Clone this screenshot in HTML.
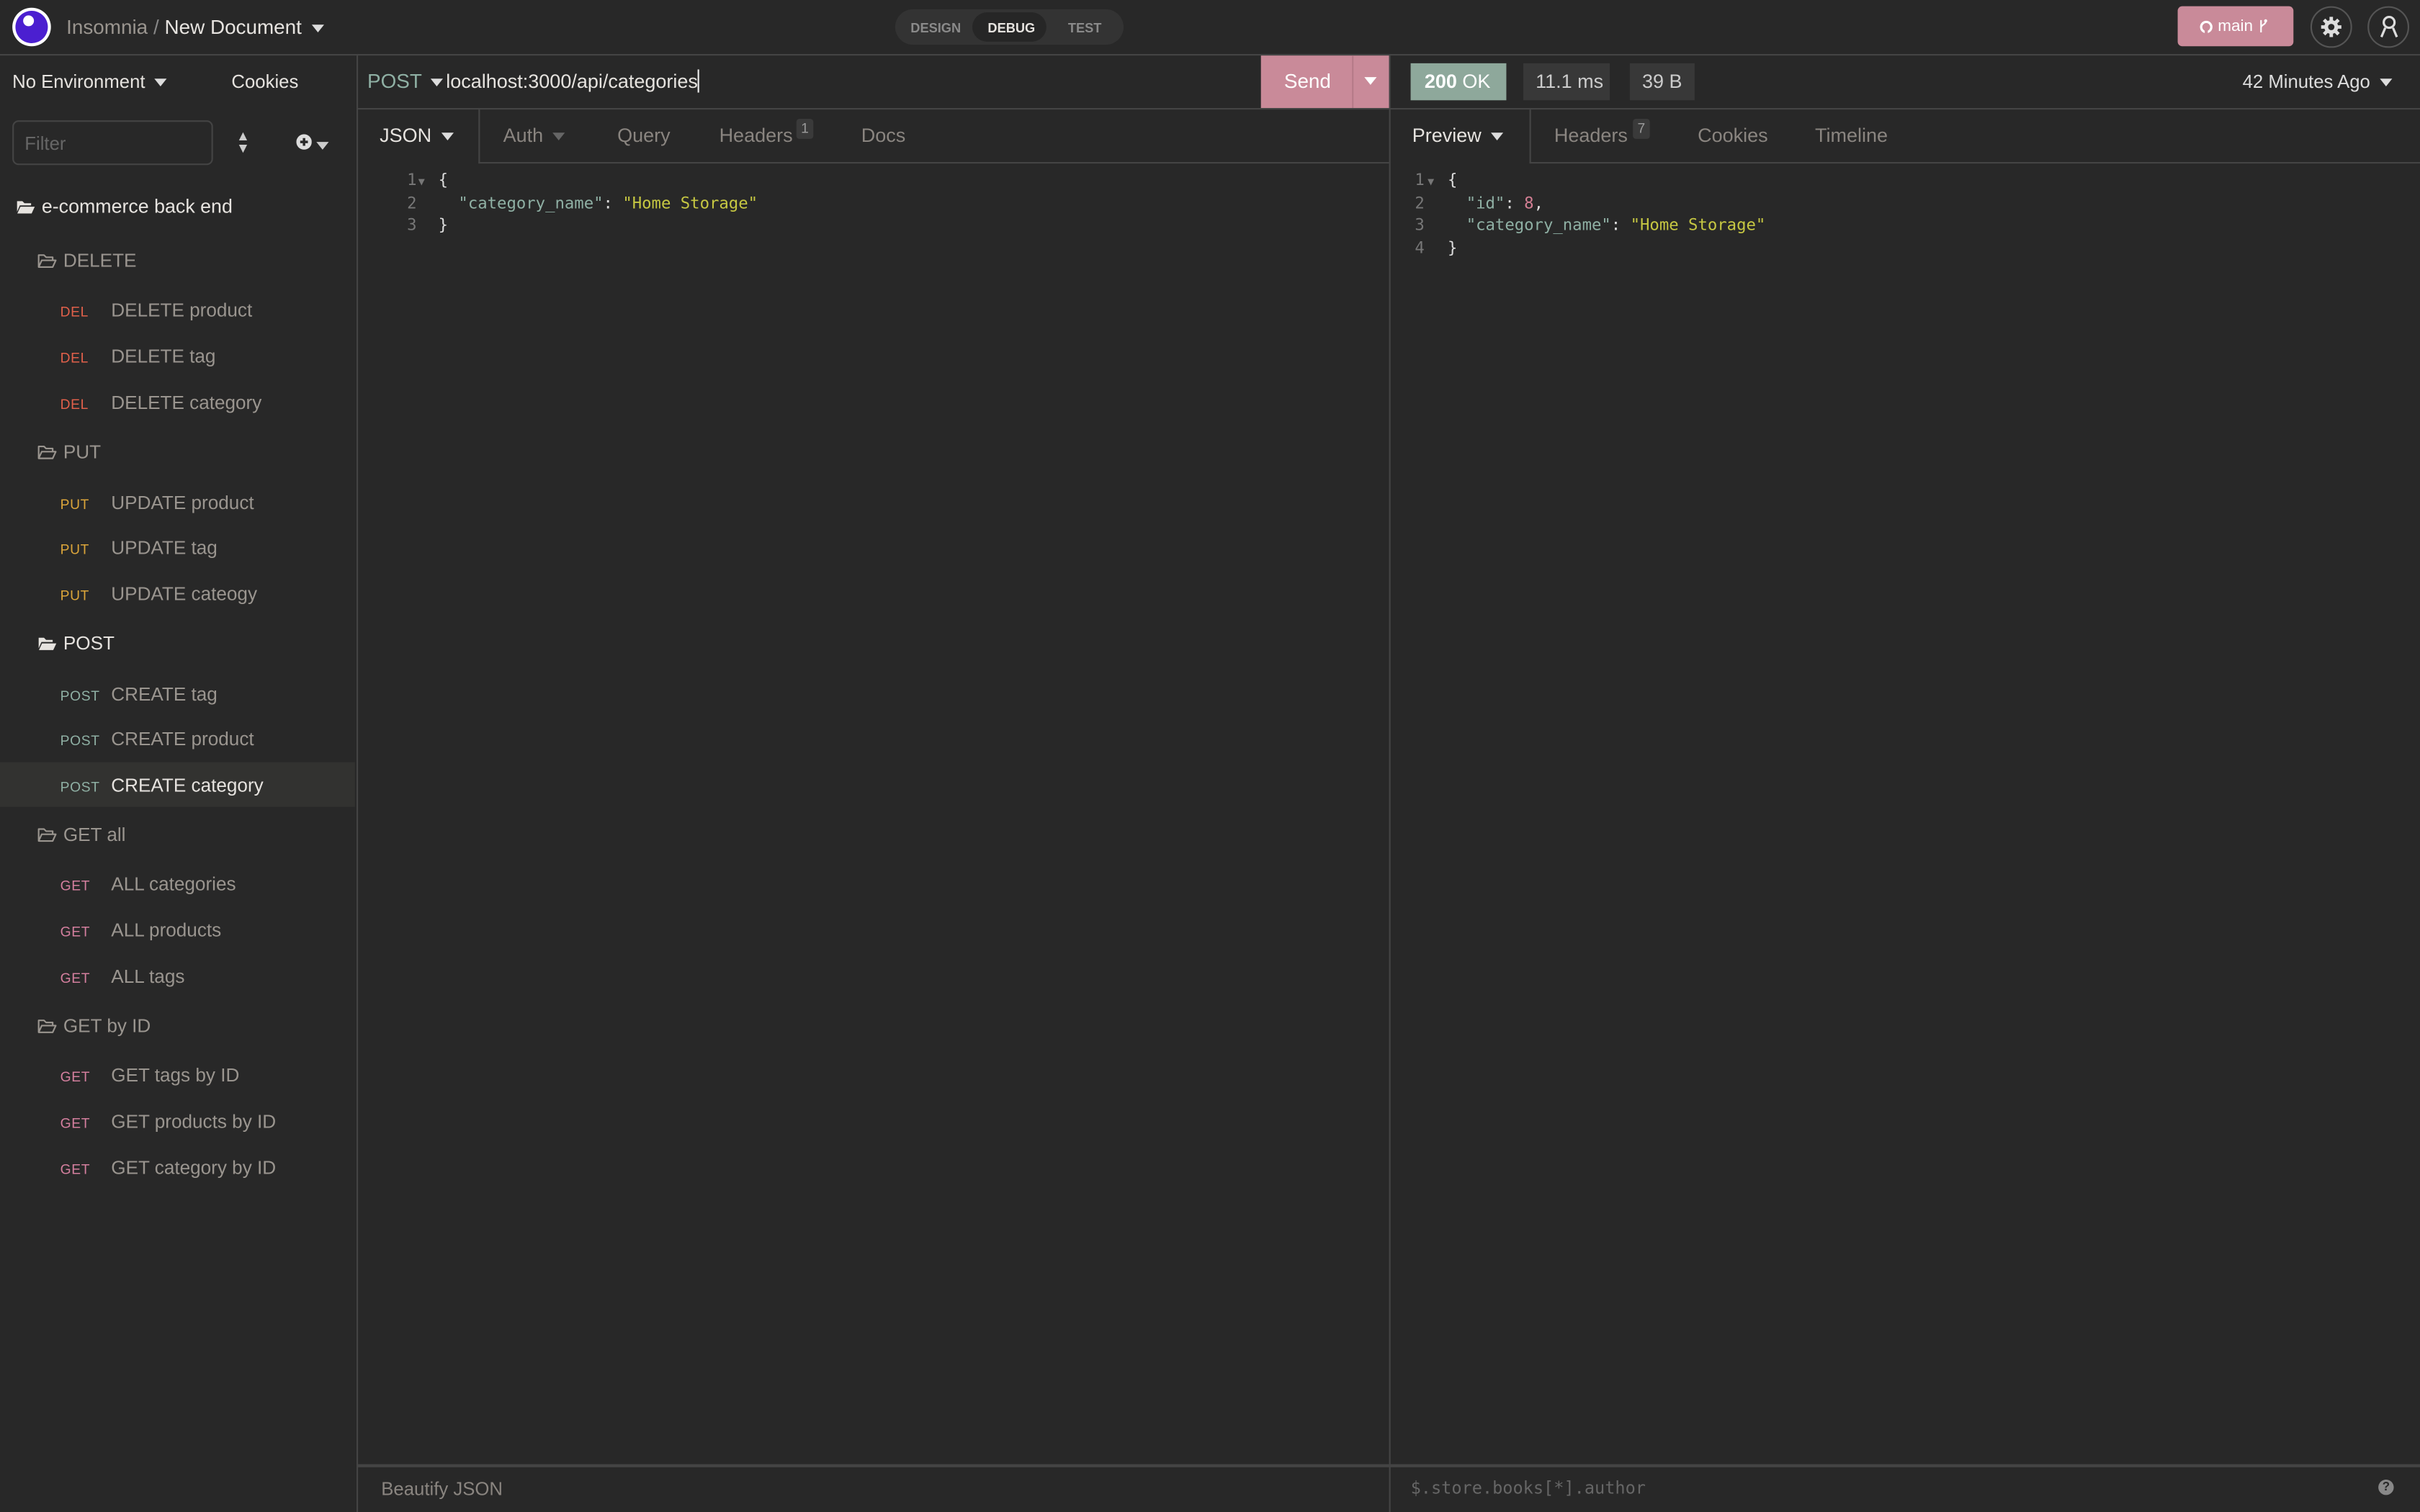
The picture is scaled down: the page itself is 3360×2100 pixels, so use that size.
<!DOCTYPE html>
<html><head><meta charset="utf-8"><style>
*{margin:0;padding:0;box-sizing:border-box}
html,body{width:3360px;height:2100px;background:#282828;overflow:hidden}
#r{position:absolute;left:0;top:0;width:1568px;height:980px;transform:scale(2.142857);transform-origin:0 0;background:#282828;font-family:"Liberation Sans",sans-serif;color:#ddd;font-size:13px}
.a{position:absolute;white-space:nowrap}
.hl{position:absolute;height:1px;background:#444}
.vl{position:absolute;width:1px;background:#444}
.tri{display:inline-block;width:0;height:0;border-left:4px solid transparent;border-right:4px solid transparent;border-top:5px solid #ddd;vertical-align:middle;margin-left:6px}
.m{position:absolute;font-size:9px;letter-spacing:.3px}
.it{position:absolute;left:72px;color:#9a958f;font-size:12.2px}
.fd{position:absolute;left:24px;color:#9a958f;font-size:12.2px}
.fd svg,.top svg{vertical-align:-1px;margin-right:4px}
.mono{font-family:"DejaVu Sans Mono","Liberation Mono",monospace;font-size:10.4px}
.ln{position:absolute;color:#777;text-align:right;width:12px}
.k{color:#8fb0a4}.s{color:#c6c742}.n{color:#d47f94}.p{color:#ddd}
</style></head><body><div id="r">
<svg width="0" height="0" style="position:absolute"><defs>
<symbol id="fo" viewBox="0 0 14 11"><path d="M1 10V1.5h3.8l1.5 1.5H11V5 M1 10L3.2 5.2H13.2L11 10Z" fill="none" stroke="#9a958f" stroke-width="1.1" stroke-linejoin="round"/></symbol>
<symbol id="ff" viewBox="0 0 14 11"><path d="M1 10V1.5h3.8l1.5 1.5H11V4.5H3L1 9Z" fill="#e6e3df"/><path d="M1.2 10.3L3.4 5.5H13.6L11.4 10.3Z" fill="#e6e3df"/></symbol>
</defs></svg>
<!-- top bar -->
<div class="a" style="left:8px;top:5px;width:25px;height:25px;border-radius:50%;background:#fff"></div>
<div class="a" style="left:10px;top:7px;width:21px;height:21px;border-radius:50%;background:#4b1fd0"></div>
<div class="a" style="left:15px;top:10px;width:7px;height:7px;border-radius:50%;background:#fff"></div>
<div class="a" style="left:43px;top:10px;font-size:13px;color:#9a958f">Insomnia <span style="color:#888">/</span> <span style="color:#e6e3df">New Document</span><span class="tri"></span></div>
<div class="a" style="left:580px;top:6px;width:148px;height:23px;border-radius:12px;background:#333"></div>
<div class="a" style="left:630px;top:8px;width:48px;height:19px;border-radius:10px;background:#262626"></div>
<div class="a" style="left:590px;top:13px;font-size:8.5px;font-weight:bold;color:#8a8a8a">DESIGN</div>
<div class="a" style="left:640px;top:13px;font-size:8.5px;font-weight:bold;color:#e6e3df">DEBUG</div>
<div class="a" style="left:692px;top:13px;font-size:8.5px;font-weight:bold;color:#8a8a8a">TEST</div>
<div class="a" style="left:1411px;top:4px;width:75px;height:26px;border-radius:3px;background:#c98a99"></div>
<svg class="a" style="left:1425px;top:13px" width="9" height="9" viewBox="0 0 9 9"><circle cx="4.5" cy="4.5" r="3.3" fill="none" stroke="#fff" stroke-width="1.5"/><rect x="3.5" y="6" width="2" height="3" fill="#c98a99"/></svg>
<div class="a" style="left:1437px;top:11px;font-size:10.5px;color:#fff">main</div>
<svg class="a" style="left:1463px;top:12px" width="7" height="10" viewBox="0 0 7 10"><path d="M2 1V9 M2 6C2 4 5 4 5 2" fill="none" stroke="#fff" stroke-width="1"/><circle cx="5" cy="1.5" r="1" fill="#fff"/></svg>
<div class="a" style="left:1497px;top:4px;width:27px;height:27px;border-radius:50%;border:1px solid #555"></div>
<svg class="a" style="left:1503px;top:10px" width="15" height="15" viewBox="0 0 16 16"><g stroke="#ddd" stroke-width="2.4"><path d="M8 1V15M1 8H15M3 3L13 13M13 3L3 13"/></g><circle cx="8" cy="8" r="4.8" fill="#ddd"/><circle cx="8" cy="8" r="2.2" fill="#282828"/></svg>
<div class="a" style="left:1534px;top:4px;width:27px;height:27px;border-radius:50%;border:1px solid #555"></div>
<svg class="a" style="left:1540px;top:9px" width="16" height="16" viewBox="0 0 16 16"><circle cx="8" cy="5.5" r="3.5" fill="none" stroke="#ddd" stroke-width="1.5"/><path d="M3 15 L5.5 9 M13 15 L10.5 9" stroke="#ddd" stroke-width="1.5" fill="none"/></svg>
<div class="hl" style="left:0;top:35px;width:1568px"></div>
<!-- sidebar -->
<div class="a" style="left:8px;top:46px;font-size:12px;color:#e6e3df">No Environment<span class="tri"></span></div>
<div class="a" style="left:150px;top:46px;font-size:12px;color:#e6e3df">Cookies</div>
<div class="a" style="left:8px;top:78px;width:130px;height:29px;border:1px solid #444;border-radius:4px"></div>
<div class="a" style="left:16px;top:86px;font-size:12px;color:#666">Filter</div>
<div class="a" style="left:153px;top:84px;font-size:9px;color:#ccc;line-height:8px">▲<br>▼</div>
<svg class="a" style="left:192px;top:87px" width="10" height="10" viewBox="0 0 10 10"><circle cx="5" cy="5" r="5" fill="#ddd"/><path d="M5 2.5V7.5M2.5 5H7.5" stroke="#282828" stroke-width="1.6"/></svg>
<div class="a" style="left:201px;top:86px"><span class="tri" style="margin-left:4px;border-top-color:#ccc"></span></div>
<div class="a fd top" style="left:10px;top:127px;font-size:12.5px;color:#e6e3df"><svg width="13" height="10"><use href="#ff"/></svg>e-commerce back end</div>
<div class="fd" style="top:162px"><svg width="13" height="10"><use href="#fo"/></svg>DELETE</div>
<div class="m" style="left:39px;top:197px;color:#e0604a">DEL</div><div class="it" style="top:194px">DELETE product</div>
<div class="m" style="left:39px;top:227px;color:#e0604a">DEL</div><div class="it" style="top:224px">DELETE tag</div>
<div class="m" style="left:39px;top:257px;color:#e0604a">DEL</div><div class="it" style="top:254px">DELETE category</div>
<div class="fd" style="top:286px"><svg width="13" height="10"><use href="#fo"/></svg>PUT</div>
<div class="m" style="left:39px;top:322px;color:#dba53a">PUT</div><div class="it" style="top:319px">UPDATE product</div>
<div class="m" style="left:39px;top:351px;color:#dba53a">PUT</div><div class="it" style="top:348px">UPDATE tag</div>
<div class="m" style="left:39px;top:381px;color:#dba53a">PUT</div><div class="it" style="top:378px">UPDATE cateogy</div>
<div class="fd" style="top:410px;color:#e6e3df"><svg width="13" height="10"><use href="#ff"/></svg>POST</div>
<div class="m" style="left:39px;top:446px;color:#8fb0a4">POST</div><div class="it" style="top:443px">CREATE tag</div>
<div class="m" style="left:39px;top:475px;color:#8fb0a4">POST</div><div class="it" style="top:472px">CREATE product</div>
<div class="a" style="left:0;top:494px;width:230px;height:29px;background:#323230"></div>
<div class="m" style="left:39px;top:505px;color:#8fb0a4">POST</div><div class="it" style="top:502px;color:#e6e3df">CREATE category</div>
<div class="fd" style="top:534px"><svg width="13" height="10"><use href="#fo"/></svg>GET all</div>
<div class="m" style="left:39px;top:569px;color:#d47f9e">GET</div><div class="it" style="top:566px">ALL categories</div>
<div class="m" style="left:39px;top:599px;color:#d47f9e">GET</div><div class="it" style="top:596px">ALL products</div>
<div class="m" style="left:39px;top:629px;color:#d47f9e">GET</div><div class="it" style="top:626px">ALL tags</div>
<div class="fd" style="top:658px"><svg width="13" height="10"><use href="#fo"/></svg>GET by ID</div>
<div class="m" style="left:39px;top:693px;color:#d47f9e">GET</div><div class="it" style="top:690px">GET tags by ID</div>
<div class="m" style="left:39px;top:723px;color:#d47f9e">GET</div><div class="it" style="top:720px">GET products by ID</div>
<div class="m" style="left:39px;top:753px;color:#d47f9e">GET</div><div class="it" style="top:750px">GET category by ID</div>
<div class="vl" style="left:231px;top:35px;height:945px"></div>
<!-- request pane -->
<div class="a" style="left:238px;top:45px;font-size:13px;color:#8fb0a4">POST<span class="tri"></span></div>
<div class="a" style="left:289px;top:45px;font-size:12.6px;color:#e6e3df">localhost:3000/api/categories<span style="display:inline-block;width:1px;height:15px;background:#eee;vertical-align:-3px"></span></div>
<div class="a" style="left:817px;top:36px;width:83px;height:34px;background:#c98a99"></div>
<div class="vl" style="left:876px;top:36px;height:34px;background:#b57a88"></div>
<div class="a" style="left:832px;top:45px;font-size:13px;color:#fff">Send</div>
<div class="a" style="left:878px;top:44px"><span class="tri" style="border-top-color:#fff"></span></div>
<div class="hl" style="left:231px;top:70px;width:1337px"></div>
<div class="a" style="left:246px;top:81px;font-size:12.6px;color:#e6e3df">JSON<span class="tri"></span></div>
<div class="vl" style="left:310px;top:70px;height:36px"></div>
<div class="hl" style="left:310px;top:105px;width:590px"></div>
<div class="a" style="left:326px;top:81px;font-size:12.6px;color:#8a8580">Auth<span class="tri" style="border-top-color:#666"></span></div>
<div class="a" style="left:400px;top:81px;font-size:12.6px;color:#8a8580">Query</div>
<div class="a" style="left:466px;top:81px;font-size:12.6px;color:#8a8580">Headers</div>
<div class="a" style="left:516px;top:77px;width:11px;height:13px;background:#3a3a3a;border-radius:2px;font-size:9px;color:#999;text-align:center;line-height:13px">1</div>
<div class="a" style="left:558px;top:81px;font-size:12.6px;color:#8a8580">Docs</div>
<div class="a mono" style="left:250px;top:110px;line-height:14.5px">
<div style="position:relative;height:14.5px"><span class="ln" style="left:8px">1</span><span style="position:absolute;left:21px;top:1px;color:#777;font-size:7px">▼</span><span class="p" style="position:absolute;left:34px">{</span></div>
<div style="position:relative;height:14.5px"><span class="ln" style="left:8px">2</span><span style="position:absolute;left:47px"><span class="k">"category_name"</span><span class="p">: </span><span class="s">"Home Storage"</span></span></div>
<div style="position:relative;height:14.5px"><span class="ln" style="left:8px">3</span><span class="p" style="position:absolute;left:34px">}</span></div>
</div>
<div class="vl" style="left:900px;top:35px;height:945px"></div>
<!-- response pane -->
<div class="a" style="left:914px;top:41px;width:62px;height:24px;background:#8ea89b"></div>
<div class="a" style="left:923px;top:46px;font-size:12.6px;color:#fff"><b>200</b> OK</div>
<div class="a" style="left:987px;top:41px;width:56px;height:24px;background:#383838"></div>
<div class="a" style="left:995px;top:46px;font-size:12.6px;color:#ccc">11.1 ms</div>
<div class="a" style="left:1056px;top:41px;width:42px;height:24px;background:#383838"></div>
<div class="a" style="left:1064px;top:46px;font-size:12.6px;color:#ccc">39 B</div>
<div class="a" style="left:1453px;top:46px;font-size:12px;color:#ddd">42 Minutes Ago<span class="tri"></span></div>
<div class="a" style="left:915px;top:81px;font-size:12.6px;color:#e6e3df">Preview<span class="tri"></span></div>
<div class="vl" style="left:991px;top:70px;height:36px"></div>
<div class="hl" style="left:991px;top:105px;width:577px"></div>
<div class="a" style="left:1007px;top:81px;font-size:12.6px;color:#8a8580">Headers</div>
<div class="a" style="left:1058px;top:77px;width:11px;height:13px;background:#3a3a3a;border-radius:2px;font-size:9px;color:#999;text-align:center;line-height:13px">7</div>
<div class="a" style="left:1100px;top:81px;font-size:12.6px;color:#8a8580">Cookies</div>
<div class="a" style="left:1176px;top:81px;font-size:12.6px;color:#8a8580">Timeline</div>
<div class="a mono" style="left:914px;top:110px;line-height:14.5px">
<div style="position:relative;height:14.5px"><span class="ln" style="left:-3px">1</span><span style="position:absolute;left:11px;top:1px;color:#777;font-size:7px">▼</span><span class="p" style="position:absolute;left:24px">{</span></div>
<div style="position:relative;height:14.5px"><span class="ln" style="left:-3px">2</span><span style="position:absolute;left:36px"><span class="k">"id"</span><span class="p">: </span><span class="n">8</span><span class="p">,</span></span></div>
<div style="position:relative;height:14.5px"><span class="ln" style="left:-3px">3</span><span style="position:absolute;left:36px"><span class="k">"category_name"</span><span class="p">: </span><span class="s">"Home Storage"</span></span></div>
<div style="position:relative;height:14.5px"><span class="ln" style="left:-3px">4</span><span class="p" style="position:absolute;left:24px">}</span></div>
</div>
<!-- bottom -->
<div class="hl" style="left:231px;top:949px;width:1337px;height:2px;background:#444"></div>
<div class="a" style="left:247px;top:958px;font-size:12px;color:#8a8580">Beautify JSON</div>
<div class="a mono" style="left:914px;top:958px;font-size:11px;color:#666">$.store.books[*].author</div>
<div class="a" style="left:1541px;top:959px;width:10px;height:10px;border-radius:50%;background:#888;font-size:8px;color:#282828;text-align:center;line-height:10px;font-weight:bold">?</div>
</div></body></html>
